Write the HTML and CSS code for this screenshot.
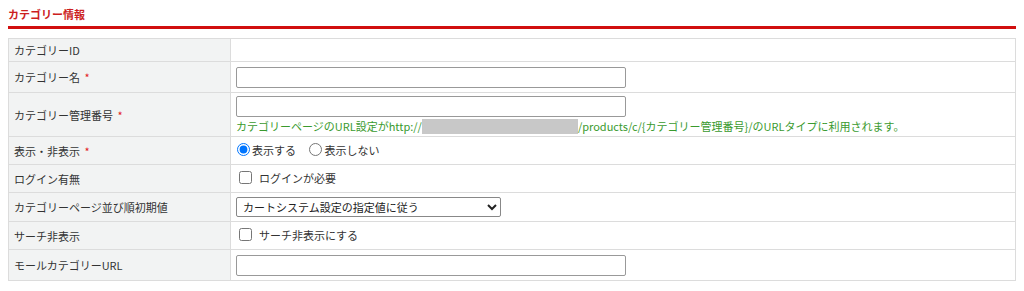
FILE: index.html
```html
<!DOCTYPE html>
<html lang="ja">
<head>
	<meta charset="utf-8">
	<title>カテゴリー情報</title>
	<link rel="stylesheet" href="styles.css">
</head>
<body>

<div class="section">
    <h2 class="section-title">カテゴリー情報</h2>

    <!-- category settings table -->
    <table class="form-table">
        <colgroup>
            <col class="col-label">
            <col>
        </colgroup>
        <tbody>
            <tr class="row-s">
                <th>カテゴリーID</th>
                <td></td>
            </tr>
            <tr class="row-input">
                <th>カテゴリー名 <span class="req">*</span></th>
                <td><input type="text" class="text-input"></td>
            </tr>
            <tr class="row-note">
                <th>カテゴリー管理番号 <span class="req">*</span></th>
                <td>
                    <input type="text" class="text-input">
                    <div class="note">カテゴリーページのURL設定がhttp://<span class="masked"></span>/products/c/{カテゴリー管理番号}/のURLタイプに利用されます。</div>
                </td>
            </tr>
            <tr class="row-m">
                <th>表示・非表示 <span class="req">*</span></th>
                <td>
                    <label class="opt"><input type="radio" name="visible" checked>表示する</label>
                    <label class="opt"><input type="radio" name="visible">表示しない</label>
                </td>
            </tr>
            <tr class="row-m">
                <th>ログイン有無</th>
                <td><label class="opt check"><input type="checkbox">ログインが必要</label></td>
            </tr>
            <tr class="row-m2">
                <th>カテゴリーページ並び順初期値</th>
                <td>
                    <select class="select-input">
                        <option>カートシステム設定の指定値に従う</option>
                    </select>
                </td>
            </tr>
            <tr class="row-m">
                <th>サーチ非表示</th>
                <td><label class="opt check"><input type="checkbox">サーチ非表示にする</label></td>
            </tr>
            <tr class="row-input">
                <th>モールカテゴリーURL</th>
                <td><input type="text" class="text-input"></td>
            </tr>
        </tbody>
    </table>
</div>

</body>
</html>
```

FILE: styles.css
```css
body {
    margin: 8px;
    font-family: "Noto Sans CJK JP", "Noto Sans", sans-serif;
    font-size: 11px;
    color: #333;
    background-color: #fff;
}

.section {
    width: 1008px;
}

.section-title {
    margin: 0 0 9px;
    padding-bottom: 5px;
    font-size: 11px;
    line-height: 13px;
    font-weight: bold;
    color: #cc1f1f;
    border-bottom: 3px solid #d10f0f;
}

.form-table {
    width: 100%;
    border-collapse: collapse;
    table-layout: fixed;
}

.col-label {
    width: 222px;
}

.form-table th,
.form-table td {
    border: 1px solid #dcdcdc;
    padding: 0 5px;
    text-align: left;
    vertical-align: middle;
    font-weight: normal;
    line-height: 16px;
}

.form-table th {
    background-color: #f2f3f3;
}

.row-s th, .row-s td { height: 22px; }
.row-input th, .row-input td { height: 30px; }
.row-note th, .row-note td { height: 43px; }
.row-m th, .row-m td { height: 27px; }
.row-m2 th, .row-m2 td { height: 28px; }

.req {
    margin-left: 2px;
    color: #e32020;
}

.text-input {
    display: block;
    box-sizing: border-box;
    width: 390px;
    height: 21px;
    margin: 0;
    padding: 1px 3px;
    border: 1px solid #999;
    border-radius: 2px;
    font-family: inherit;
    font-size: 11px;
}

.note {
    margin-top: 1px;
    color: #3a9a2e;
    line-height: 16px;
}

.masked {
    display: inline-block;
    width: 156px;
    height: 15px;
    vertical-align: -3px;
    background-color: #c8c8c8;
}

.opt {
    display: inline-flex;
    align-items: center;
    margin-right: 10px;
}

.opt input {
    margin: 0 2px 0 1px;
}

.opt input[type="radio"] {
    width: 13px;
    height: 13px;
}

.check input {
    margin: 0 7px 0 3px;
}

.select-input {
    display: block;
    width: 265px;
    height: 20px;
    margin: 0;
    padding: 0 2px;
    border: 1px solid #888;
    border-radius: 2px;
    background-color: #fff;
    font-family: inherit;
    font-size: 11px;
    color: #222;
}
```
